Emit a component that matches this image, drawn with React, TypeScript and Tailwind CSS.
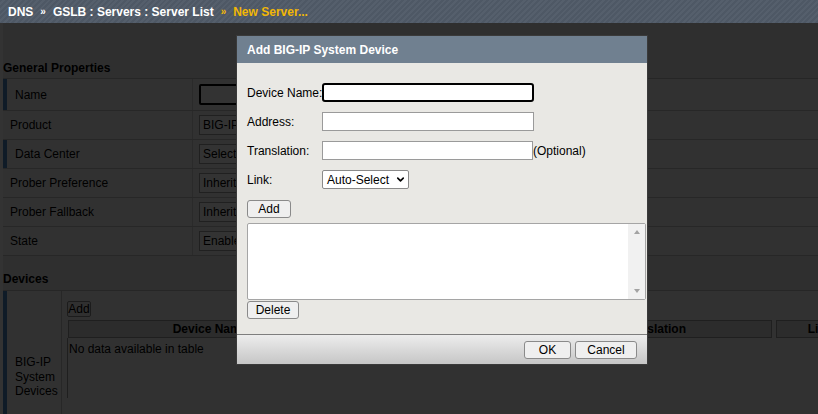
import { ChevronDown } from 'lucide-react';

const rows = [
  { label: 'Name', required: true, kind: 'input' },
  { label: 'Product', required: false, kind: 'select', value: 'BIG-IP System' },
  { label: 'Data Center', required: true, kind: 'select', value: 'Select...' },
  { label: 'Prober Preference', required: false, kind: 'select', value: 'Inherit from Data Center' },
  { label: 'Prober Fallback', required: false, kind: 'select', value: 'Inherit from Data Center' },
  { label: 'State', required: false, kind: 'select', value: 'Enabled' },
];

function Sep({ yellow }: { yellow?: boolean }) {
  return (
    <span className={`mx-[7px] text-[10px] ${yellow ? 'text-[#f2b705]' : 'text-white'}`}>
      »
    </span>
  );
}

function Btn({ children, className = '' }: { children: React.ReactNode; className?: string }) {
  return (
    <button
      className={`h-[18px] whitespace-nowrap rounded-[3px] border border-[#8a8a8a] bg-[#efefef] text-[12px] leading-none text-black ${className}`}
    >
      {children}
    </button>
  );
}

export default function App() {
  return (
    <div className="relative h-[414px] w-[818px] overflow-hidden bg-[#ebebeb] font-['Liberation_Sans',Arial,sans-serif] text-[12px] text-black">
      {/* Breadcrumb bar */}
      <header className="relative z-10 flex h-[23px] items-center whitespace-nowrap bg-[repeating-linear-gradient(135deg,#4e5865_0px,#4e5865_2px,#555f6c_2px,#555f6c_4px)] pl-[8px] font-bold text-white">
        <span>DNS</span>
        <Sep />
        <span>GSLB : Servers : Server List</span>
        <Sep yellow />
        <span className="text-[#f2b705]">New Server...</span>
      </header>

      {/* Page content (dimmed) */}
      <main className="whitespace-nowrap border-l-[3px] border-white">
        <div className="h-[34px]" />
        <h2 className="flex h-[22px] items-center border-b border-[#bdbdbd] font-bold">General Properties</h2>
        {rows.map((r, i) => (
          <div
            key={r.label}
            className={`flex border-b border-[#c4c4c4] bg-[#f6f6f6] ${i === 0 ? 'h-[32px]' : 'h-[29px]'}`}
          >
            <div className="flex w-[190px] shrink-0 items-center border-r border-[#d0d0d0]">
              {r.required ? (
                <>
                  <div className="h-full w-[4px] bg-[#4a85c4]" />
                  <span className="pl-[8px]">{r.label}</span>
                </>
              ) : (
                <span className="pl-[7px]">{r.label}</span>
              )}
            </div>
            <div className="flex items-center pl-[6px]">
              {r.kind === 'input' ? (
                <div className="h-[21px] w-[160px] rounded-[2px] border-2 border-black bg-white" />
              ) : (
                <div className="flex h-[20px] w-[160px] items-center border border-[#a0a0a0] bg-white pl-[3px]">
                  {r.value}
                </div>
              )}
            </div>
          </div>
        ))}

        <div className="h-[11px]" />
        <h2 className="flex h-[24px] items-center border-b border-[#bdbdbd] font-bold">Devices</h2>
        <div className="flex h-[140px] bg-[#f6f6f6]">
          <div className="flex w-[59px] shrink-0 border-r border-[#c4c4c4]">
            <div className="h-full w-[4px] bg-[#4a85c4]" />
            <div className="pl-[8px] pt-[64px] leading-[14.5px]">
              BIG-IP
              <br />
              System
              <br />
              Devices
            </div>
          </div>
          <div className="flex flex-col pl-[5px] pt-[10px]">
            <button className="h-[16px] w-[24px] rounded-[2px] border border-[#8a8a8a] bg-[#efefef] text-[12px] leading-none">
              Add
            </button>
            <div className="mt-[3px] flex h-[18px] pl-[1px] font-bold">
              <div className="flex w-[284px] shrink-0 items-center justify-center border border-[#999] bg-[#dadada]">Device Name</div>
              <div className="flex w-[184px] shrink-0 items-center justify-center border border-[#999] bg-[#dadada]">Address</div>
              <div className="flex w-[236px] shrink-0 items-center justify-center border border-[#999] bg-[#dadada]">Translation</div>
              <div className="ml-[4px] flex w-[88px] shrink-0 items-center justify-center border border-[#999] bg-[#dadada]">Link</div>
            </div>
            <div className="flex h-[60px] border-l border-[#999] pl-[1px] pt-[2px]">No data available in table</div>
          </div>
        </div>
      </main>

      {/* Modal overlay */}
      <div className="absolute inset-x-0 bottom-0 top-[23px] bg-black/80" />

      {/* Dialog */}
      <div className="absolute left-[236px] top-[35px] flex h-[330px] w-[412px] flex-col whitespace-nowrap border border-[#3a3a3a] bg-[#e9e8e4]">
        <div className="flex h-[27px] items-center bg-[#708090] pl-[10px] font-bold text-white">
          Add BIG-IP System Device
        </div>

        <div className="flex flex-1 flex-col pl-[10px] pt-[20px]">
          <div className="mb-[10px] flex h-[19px] items-center">
            <span className="w-[75px] shrink-0">Device Name:</span>
            <div className="h-[19px] w-[212px] shrink-0 rounded-[3px] border-2 border-black bg-white" />
          </div>
          <div className="mb-[10px] flex h-[19px] items-center">
            <span className="w-[75px] shrink-0">Address:</span>
            <div className="h-[19px] w-[212px] shrink-0 border border-[#9a9a9a] bg-white" />
          </div>
          <div className="mb-[10px] flex h-[19px] items-center">
            <span className="w-[75px] shrink-0">Translation:</span>
            <div className="h-[19px] w-[211px] shrink-0 border border-[#9a9a9a] bg-white" />
            <span>(Optional)</span>
          </div>
          <div className="flex h-[19px] items-center">
            <span className="w-[75px] shrink-0">Link:</span>
            <div className="flex h-[19px] w-[87px] shrink-0 items-center gap-[6px] rounded-[2px] border border-[#8a8a8a] bg-white pl-[4px]">
              <span>Auto-Select</span>
              <ChevronDown size={11} strokeWidth={3.5} />
            </div>
          </div>

          <Btn className="mt-[11px] w-[44px]">Add</Btn>

          <div className="mt-[5px] flex h-[77px] w-[399px] rounded-[2px] border border-[#a5a5a5] bg-white">
            <div className="flex-1" />
            <div className="flex w-[17px] flex-col items-center justify-between bg-[#f1f1f1] py-[6px]">
              <div className="h-0 w-0 border-x-[3.5px] border-b-[4px] border-x-transparent border-b-[#a3a3a3]" />
              <div className="h-0 w-0 border-x-[3.5px] border-t-[4px] border-x-transparent border-t-[#a3a3a3]" />
            </div>
          </div>

          <Btn className="mt-[1px] w-[52px]">Delete</Btn>
        </div>

        <div className="flex h-[30px] items-center justify-end gap-[4px] border-t border-[#7e7e7e] bg-gradient-to-b from-[#ededed] to-[#c6c6c6] pr-[10px]">
          <Btn className="w-[47px]">OK</Btn>
          <Btn className="w-[62px]">Cancel</Btn>
        </div>
      </div>
    </div>
  );
}
